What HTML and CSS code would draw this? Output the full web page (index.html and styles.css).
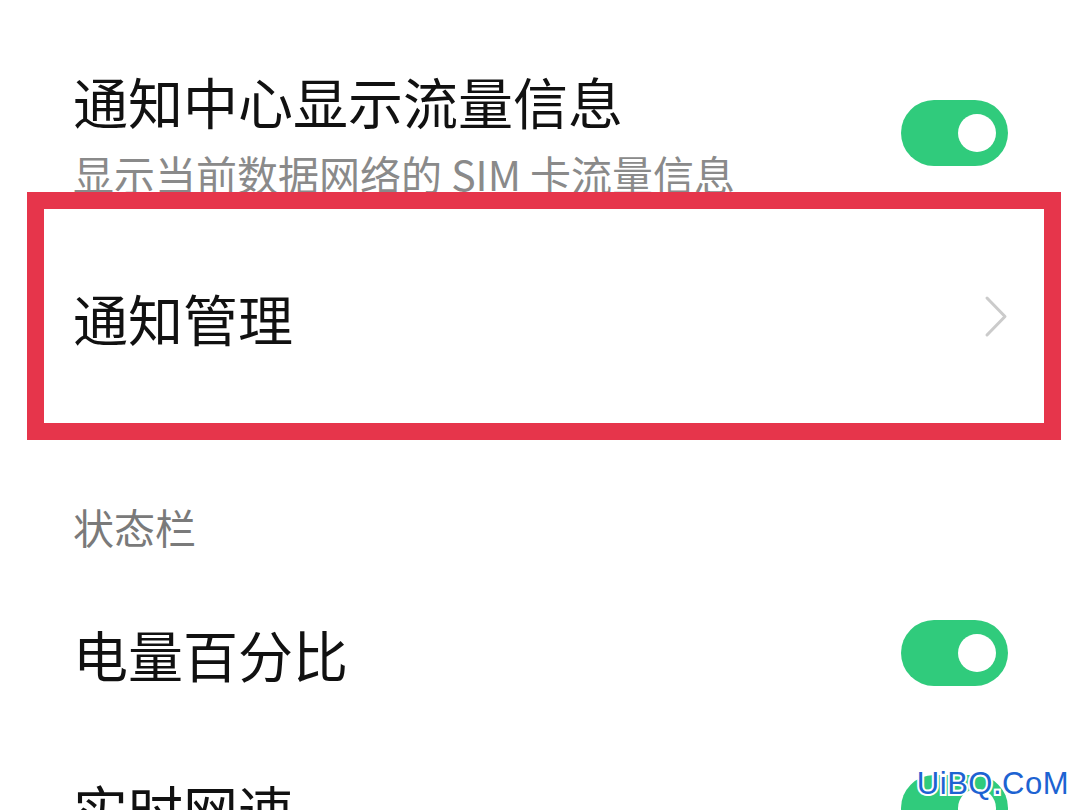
FILE: index.html
```html
<!DOCTYPE html>
<html lang="zh-CN">
<head>
<meta charset="utf-8">
<title>通知与状态栏</title>
<link rel="stylesheet" href="styles.css">
</head>
<body>
<main class="page">
  <div class="row row-first">
    <div class="text">
      <div class="title">通知中心显示流量信息</div>
      <div class="sub">显示当前数据网络的 SIM 卡流量信息</div>
    </div>
    <div class="toggle"><span class="knob"></span></div>
  </div>

  <div class="row row-link">
    <div class="title">通知管理</div>
    <svg class="chevron" width="26" height="44" viewBox="0 0 26 44" aria-hidden="true">
      <polyline points="4,3 22,21.5 4,40" fill="none" stroke="#cbcbcb" stroke-width="3" stroke-linecap="round" stroke-linejoin="round"/>
    </svg>
    <div class="highlight"></div>
  </div>

  <div class="section">状态栏</div>

  <div class="row row-switch">
    <div class="title">电量百分比</div>
    <div class="toggle"><span class="knob"></span></div>
  </div>

  <div class="row row-switch">
    <div class="title">实时网速</div>
    <div class="toggle"><span class="knob"></span></div>
  </div>

  <div class="watermark">UiBQ.CoM</div>
</main>
</body>
</html>
```
FILE: styles.css
```css
html, body {
  margin: 0;
  padding: 0;
  background: #ffffff;
}

.page {
  position: relative;
  width: 1080px;
  height: 810px;
  overflow: hidden;
  padding: 0 72px 0 73px;
  box-sizing: border-box;
  font-family: "Noto Sans CJK SC", "Noto Sans", sans-serif;
  color: #111111;
}

.row {
  display: flex;
  align-items: center;
  justify-content: space-between;
}

.row-first {
  padding-top: 68px;
  height: 129px;
}

.text {
  display: flex;
  flex-direction: column;
  gap: 17px;
}

.title {
  font-size: 55px;
  line-height: 64px;
  color: #111111;
  white-space: nowrap;
}

.sub {
  font-size: 41px;
  line-height: 48px;
  color: #8a8a8a;
  white-space: nowrap;
}

.toggle {
  width: 107px;
  height: 66px;
  border-radius: 33px;
  background: #30cb7c;
  display: flex;
  align-items: center;
  justify-content: flex-end;
  padding-right: 12px;
  box-sizing: border-box;
  flex: none;
}

.knob {
  width: 38px;
  height: 38px;
  border-radius: 50%;
  background: #ffffff;
}

.row-link {
  position: relative;
  height: 240px;
}

.chevron {
  display: block;
  flex: none;
  margin-right: -1px;
}

.highlight {
  position: absolute;
  top: -5px;
  left: -46px;
  width: 1034px;
  height: 248px;
  border: 17px solid #e6354b;
  box-sizing: border-box;
  pointer-events: none;
}

.section {
  margin-top: 59px;
  font-size: 41px;
  line-height: 60px;
  color: #7a7a7a;
}

.row-switch {
  height: 155px;
}

.section + .row-switch {
  margin-top: 19px;
}

.watermark {
  position: absolute;
  right: 11px;
  bottom: 8px;
  font-family: "Liberation Sans", Arial, sans-serif;
  font-size: 31px;
  line-height: 36px;
  color: #1d63d2;
  -webkit-text-stroke: 4px #ffffff;
  paint-order: stroke fill;
  letter-spacing: 0.5px;
}
```
